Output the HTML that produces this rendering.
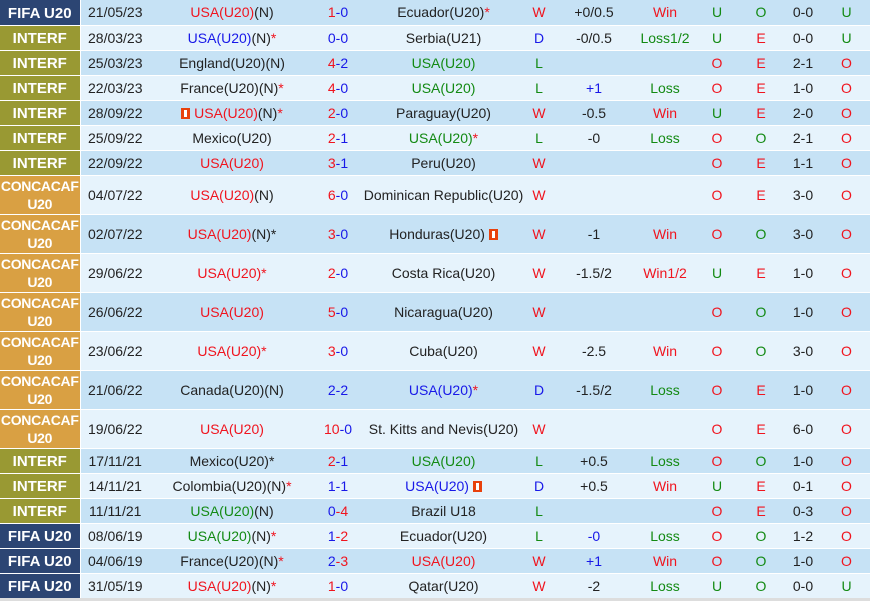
<!DOCTYPE html>
<html><head><meta charset="utf-8"><style>
body{margin:0;background:#fff;width:870px;height:601px;overflow:hidden;font-family:"Liberation Sans",Arial,sans-serif;font-size:14px;color:#222}
table{border-collapse:collapse;width:870px;table-layout:fixed;position:absolute;top:0;left:0}
td{padding:0;text-align:center;white-space:nowrap;overflow:hidden;border-bottom:1px solid #fff;vertical-align:middle;line-height:16px}
tr.d td{background:#c6e2f5}
tr.l td{background:#e6f3fc}
tr{height:25px}
tr.t{height:39px}
td.lg{color:#fff;font-weight:bold;font-size:15px;border-right:1px solid #fff;line-height:18px}
td.f,td.i{padding-top:3px;line-height:16px}
td.c{font-size:14px!important;letter-spacing:-0.3px}
tr td.f{background:#2c4573}
tr td.i{background:#999933}
tr td.c{background:#d9a043}
.r{color:#f0141e}.b{color:#1818e8}.g{color:#138a13}
.fl{display:inline-block;width:9px;height:11px;background:#e8410c;vertical-align:-1px;position:relative}
.fl:after{content:"";position:absolute;left:3px;top:2px;width:3px;height:7px;background:#fff}
.bot{position:absolute;left:0;top:598px;width:870px;height:3px;background:#ddd}
</style></head><body>
<table>
<colgroup><col style="width:80px"><col style="width:70px"><col style="width:164px"><col style="width:48px"><col style="width:163px"><col style="width:28px"><col style="width:82px"><col style="width:60px"><col style="width:44px"><col style="width:44px"><col style="width:40px"><col style="width:47px"></colgroup>
<tr class="d"><td class="lg f">FIFA U20</td><td>21/05/23</td><td><span class="r">USA(U20)</span>(N)</td><td><span class="r">1</span><span class="b">-0</span></td><td>Ecuador(U20)<span class="r">*</span></td><td class="r">W</td><td>+0/0.5</td><td class="r">Win</td><td class="g">U</td><td class="g">O</td><td>0-0</td><td class="g">U</td></tr>
<tr class="l"><td class="lg i">INTERF</td><td>28/03/23</td><td><span class="b">USA(U20)</span>(N)<span class="r">*</span></td><td class="b">0-0</td><td>Serbia(U21)</td><td class="b">D</td><td>-0/0.5</td><td class="g">Loss1/2</td><td class="g">U</td><td class="r">E</td><td>0-0</td><td class="g">U</td></tr>
<tr class="d"><td class="lg i">INTERF</td><td>25/03/23</td><td>England(U20)(N)</td><td><span class="r">4</span><span class="b">-2</span></td><td class="g">USA(U20)</td><td class="g">L</td><td></td><td></td><td class="r">O</td><td class="r">E</td><td>2-1</td><td class="r">O</td></tr>
<tr class="l"><td class="lg i">INTERF</td><td>22/03/23</td><td>France(U20)(N)<span class="r">*</span></td><td><span class="r">4</span><span class="b">-0</span></td><td class="g">USA(U20)</td><td class="g">L</td><td class="b">+1</td><td class="g">Loss</td><td class="r">O</td><td class="r">E</td><td>1-0</td><td class="r">O</td></tr>
<tr class="d"><td class="lg i">INTERF</td><td>28/09/22</td><td><span class="fl"></span> <span class="r">USA(U20)</span>(N)<span class="r">*</span></td><td><span class="r">2</span><span class="b">-0</span></td><td>Paraguay(U20)</td><td class="r">W</td><td>-0.5</td><td class="r">Win</td><td class="g">U</td><td class="r">E</td><td>2-0</td><td class="r">O</td></tr>
<tr class="l"><td class="lg i">INTERF</td><td>25/09/22</td><td>Mexico(U20)</td><td><span class="r">2</span><span class="b">-1</span></td><td><span class="g">USA(U20)</span><span class="r">*</span></td><td class="g">L</td><td>-0</td><td class="g">Loss</td><td class="r">O</td><td class="g">O</td><td>2-1</td><td class="r">O</td></tr>
<tr class="d"><td class="lg i">INTERF</td><td>22/09/22</td><td class="r">USA(U20)</td><td><span class="r">3</span><span class="b">-1</span></td><td>Peru(U20)</td><td class="r">W</td><td></td><td></td><td class="r">O</td><td class="r">E</td><td>1-1</td><td class="r">O</td></tr>
<tr class="l t"><td class="lg c">CONCACAF<br>U20</td><td>04/07/22</td><td><span class="r">USA(U20)</span>(N)</td><td><span class="r">6</span><span class="b">-0</span></td><td>Dominican Republic(U20)</td><td class="r">W</td><td></td><td></td><td class="r">O</td><td class="r">E</td><td>3-0</td><td class="r">O</td></tr>
<tr class="d t"><td class="lg c">CONCACAF<br>U20</td><td>02/07/22</td><td><span class="r">USA(U20)</span>(N)*</td><td><span class="r">3</span><span class="b">-0</span></td><td>Honduras(U20) <span class="fl"></span></td><td class="r">W</td><td>-1</td><td class="r">Win</td><td class="r">O</td><td class="g">O</td><td>3-0</td><td class="r">O</td></tr>
<tr class="l t"><td class="lg c">CONCACAF<br>U20</td><td>29/06/22</td><td class="r">USA(U20)*</td><td><span class="r">2</span><span class="b">-0</span></td><td>Costa Rica(U20)</td><td class="r">W</td><td>-1.5/2</td><td class="r">Win1/2</td><td class="g">U</td><td class="r">E</td><td>1-0</td><td class="r">O</td></tr>
<tr class="d t"><td class="lg c">CONCACAF<br>U20</td><td>26/06/22</td><td class="r">USA(U20)</td><td><span class="r">5</span><span class="b">-0</span></td><td>Nicaragua(U20)</td><td class="r">W</td><td></td><td></td><td class="r">O</td><td class="g">O</td><td>1-0</td><td class="r">O</td></tr>
<tr class="l t"><td class="lg c">CONCACAF<br>U20</td><td>23/06/22</td><td class="r">USA(U20)*</td><td><span class="r">3</span><span class="b">-0</span></td><td>Cuba(U20)</td><td class="r">W</td><td>-2.5</td><td class="r">Win</td><td class="r">O</td><td class="g">O</td><td>3-0</td><td class="r">O</td></tr>
<tr class="d t"><td class="lg c">CONCACAF<br>U20</td><td>21/06/22</td><td>Canada(U20)(N)</td><td class="b">2-2</td><td><span class="b">USA(U20)</span><span class="r">*</span></td><td class="b">D</td><td>-1.5/2</td><td class="g">Loss</td><td class="r">O</td><td class="r">E</td><td>1-0</td><td class="r">O</td></tr>
<tr class="l t"><td class="lg c">CONCACAF<br>U20</td><td>19/06/22</td><td class="r">USA(U20)</td><td><span class="r">10</span><span class="b">-0</span></td><td>St. Kitts and Nevis(U20)</td><td class="r">W</td><td></td><td></td><td class="r">O</td><td class="r">E</td><td>6-0</td><td class="r">O</td></tr>
<tr class="d"><td class="lg i">INTERF</td><td>17/11/21</td><td>Mexico(U20)*</td><td><span class="r">2</span><span class="b">-1</span></td><td class="g">USA(U20)</td><td class="g">L</td><td>+0.5</td><td class="g">Loss</td><td class="r">O</td><td class="g">O</td><td>1-0</td><td class="r">O</td></tr>
<tr class="l"><td class="lg i">INTERF</td><td>14/11/21</td><td>Colombia(U20)(N)<span class="r">*</span></td><td class="b">1-1</td><td><span class="b">USA(U20)</span> <span class="fl"></span></td><td class="b">D</td><td>+0.5</td><td class="r">Win</td><td class="g">U</td><td class="r">E</td><td>0-1</td><td class="r">O</td></tr>
<tr class="d"><td class="lg i">INTERF</td><td>11/11/21</td><td><span class="g">USA(U20)</span>(N)</td><td><span class="b">0</span><span class="r">-4</span></td><td>Brazil U18</td><td class="g">L</td><td></td><td></td><td class="r">O</td><td class="r">E</td><td>0-3</td><td class="r">O</td></tr>
<tr class="l"><td class="lg f">FIFA U20</td><td>08/06/19</td><td><span class="g">USA(U20)</span>(N)<span class="r">*</span></td><td><span class="b">1</span><span class="r">-2</span></td><td>Ecuador(U20)</td><td class="g">L</td><td class="b">-0</td><td class="g">Loss</td><td class="r">O</td><td class="g">O</td><td>1-2</td><td class="r">O</td></tr>
<tr class="d"><td class="lg f">FIFA U20</td><td>04/06/19</td><td>France(U20)(N)<span class="r">*</span></td><td><span class="b">2</span><span class="r">-3</span></td><td class="r">USA(U20)</td><td class="r">W</td><td class="b">+1</td><td class="r">Win</td><td class="r">O</td><td class="g">O</td><td>1-0</td><td class="r">O</td></tr>
<tr class="l"><td class="lg f">FIFA U20</td><td>31/05/19</td><td><span class="r">USA(U20)</span>(N)<span class="r">*</span></td><td><span class="r">1</span><span class="b">-0</span></td><td>Qatar(U20)</td><td class="r">W</td><td>-2</td><td class="g">Loss</td><td class="g">U</td><td class="g">O</td><td>0-0</td><td class="g">U</td></tr>
</table>
<div class="bot"></div>
</body></html>
